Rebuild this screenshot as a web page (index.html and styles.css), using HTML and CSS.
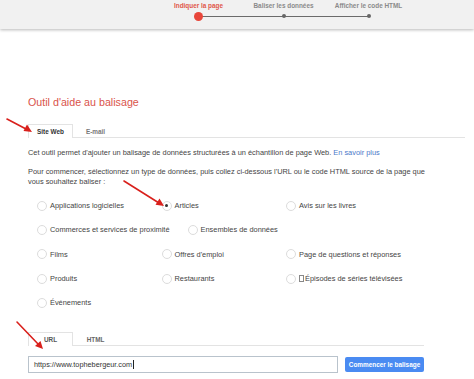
FILE: index.html
```html
<!DOCTYPE html>
<html lang="fr">
<head>
    <meta charset="UTF-8">
    <meta name="viewport" content="width=device-width, initial-scale=1.0">
    <title>Outil d'aide au balisage</title>
    <link rel="stylesheet" href="styles.css">
</head>
<body>
    <div class="topbar">
        <div class="steps">
            <div class="step active">
                <span class="step-label">Indiquer la page</span>
                <span class="step-dot"></span>
            </div>
            <div class="step">
                <span class="step-label">Baliser les données</span>
                <span class="step-dot"></span>
            </div>
            <div class="step">
                <span class="step-label">Afficher le code HTML</span>
                <span class="step-dot"></span>
            </div>
        </div>
    </div>

    <div class="main">
        <h1>Outil d'aide au balisage</h1>

        <div class="tabs tabs-wide">
            <div class="tab active">Site Web</div>
            <div class="tab">E-mail</div>
        </div>

        <p class="intro">Cet outil permet d'ajouter un balisage de données structurées à un échantillon de page Web. <a href="#">En savoir plus</a></p>
        <p class="intro second">Pour commencer, sélectionnez un type de données, puis collez ci-dessous l'URL ou le code HTML source de la page que vous souhaitez baliser :</p>

        <div class="types">
            <label class="type"><span class="radio"></span>Applications logicielles</label>
            <label class="type"><span class="radio checked"></span>Articles</label>
            <label class="type"><span class="radio"></span>Avis sur les livres</label>
            <label class="type"><span class="radio"></span>Commerces et services de proximité</label>
            <label class="type"><span class="radio"></span>Ensembles de données</label>
            <label class="type"><span class="radio"></span>Films</label>
            <label class="type"><span class="radio"></span>Offres d'emploi</label>
            <label class="type"><span class="radio"></span>Page de questions et réponses</label>
            <label class="type"><span class="radio"></span>Produits</label>
            <label class="type"><span class="radio"></span>Restaurants</label>
            <label class="type"><span class="radio"></span><span class="tofu"></span>Épisodes de séries télévisées</label>
            <label class="type"><span class="radio"></span>Événements</label>
        </div>

        <div class="tabs tabs-narrow">
            <div class="tab active light">URL</div>
            <div class="tab light">HTML</div>
        </div>

        <div class="url-row">
            <div class="url-field">https://www.tophebergeur.com<span class="caret"></span></div>
            <button class="start">Commencer le balisage</button>
        </div>
    </div>

    <!-- annotation arrows -->
    <svg class="arrows" width="474" height="379" viewBox="0 0 474 379">
        <g stroke="#d9201c" stroke-width="1.6" stroke-linecap="round">
            <line x1="7" y1="119" x2="27" y2="129.5"/>
            <line x1="124" y1="181" x2="159" y2="203"/>
            <line x1="17" y1="322" x2="39" y2="345"/>
        </g>
        <g fill="#d9201c">
            <polygon points="32,132 23.5,131 27,124.5"/>
            <polygon points="164,206 155.5,204.8 159.5,198.6"/>
            <polygon points="43,349 35,346 40.5,341"/>
        </g>
    </svg>
</body>
</html>
```

FILE: styles.css
```css
html, body {
    margin: 0;
    padding: 0;
    background: #fff;
    font-family: "Liberation Sans", Arial, sans-serif;
    color: #444;
}

body {
    position: relative;
    width: 474px;
    height: 379px;
    overflow: hidden;
}

.topbar {
    height: 29px;
    background: #f1f1f1;
    box-shadow: 0 1px 3px rgba(0, 0, 0, 0.28);
}

.steps {
    position: relative;
    display: flex;
    width: 255px;
    margin-left: 156px;
}

.steps::before {
    content: "";
    position: absolute;
    left: 43px;
    right: 43px;
    top: 15.5px;
    height: 1px;
    background: #6b6b6b;
}

.step {
    width: 85px;
    display: flex;
    flex-direction: column;
    align-items: center;
}

.step-label {
    margin-top: 2px;
    font-size: 6.4px;
    line-height: 8px;
    font-weight: bold;
    color: #8a8a8a;
    white-space: nowrap;
}

.step-dot {
    position: relative;
    margin-top: 4px;
    width: 4px;
    height: 4px;
    border-radius: 50%;
    background: #666;
}

.step.active .step-label {
    color: #e0574a;
}

.step.active .step-dot {
    margin-top: 1.5px;
    width: 9px;
    height: 9px;
    background: #e8463a;
}

.main {
    padding-left: 28px;
    width: 402px;
}

h1 {
    margin: 67px 0 0;
    font-size: 10.7px;
    line-height: 13px;
    font-weight: normal;
    color: #d9534a;
}

.tabs {
    display: flex;
    border-bottom: 1px solid #e3e3e3;
}

.tabs-wide {
    margin-top: 14.5px;
    width: 437px;
}

.tabs-narrow {
    margin-top: 17px;
    width: 396px;
}

.tab {
    width: 45px;
    height: 13px;
    margin-bottom: -1px;
    box-sizing: border-box;
    text-align: center;
    font-size: 6.4px;
    line-height: 13px;
    font-weight: bold;
    color: #777;
    border: 1px solid transparent;
    border-bottom: none;
}

.tab.active {
    height: 14px;
    background: #fff;
    color: #333;
    border-color: #e3e3e3;
}

.tab.light {
    color: #666;
}

.tab.active.light {
    color: #555;
}

.intro {
    margin: 10px 0 0;
    font-size: 7.4px;
    line-height: 10px;
    color: #444;
}

.intro.second {
    margin-top: 9px;
}

.intro a {
    color: #4a79c9;
    text-decoration: none;
}

.types {
    display: flex;
    flex-wrap: wrap;
    margin-top: 7px;
    padding-left: 9px;
    width: 392px;
}

.type {
    display: flex;
    align-items: center;
    min-width: 124.5px;
    height: 24.3px;
    padding-right: 18px;
    box-sizing: border-box;
    font-size: 7.4px;
    color: #444;
    white-space: nowrap;
}

.radio {
    position: relative;
    width: 10px;
    height: 10px;
    margin-right: 3px;
    box-sizing: border-box;
    border: 1px solid #dcdcdc;
    border-radius: 50%;
    background: #fff;
}

.radio.checked::after {
    content: "";
    position: absolute;
    left: 2.5px;
    top: 2.5px;
    width: 3px;
    height: 3px;
    border-radius: 50%;
    background: #333;
}

.tofu {
    display: inline-block;
    width: 3px;
    height: 5px;
    margin-right: 1px;
    border: 0.5px solid #888;
}

.url-row {
    display: flex;
    align-items: center;
    margin-top: 10px;
}

.url-field {
    width: 310px;
    height: 17px;
    box-sizing: border-box;
    padding-left: 5px;
    border: 1px solid #b9c3cc;
    font-size: 7.3px;
    line-height: 15px;
    color: #333;
}

.caret {
    display: inline-block;
    width: 1px;
    height: 9px;
    margin-left: 1px;
    vertical-align: -2px;
    background: #222;
}

.start {
    margin-left: 7px;
    width: 79px;
    height: 15px;
    padding: 0;
    border: none;
    border-radius: 2px;
    background: #4a8bf2;
    color: #fff;
    font-family: "Liberation Sans", Arial, sans-serif;
    font-size: 6.4px;
    font-weight: bold;
}

.arrows {
    position: absolute;
    left: 0;
    top: 0;
    pointer-events: none;
}
```
